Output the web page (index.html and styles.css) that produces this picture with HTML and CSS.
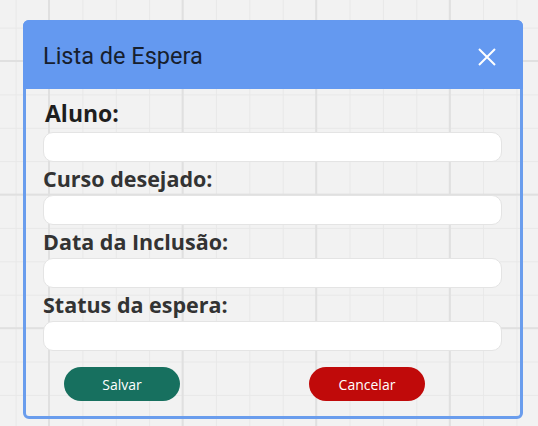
FILE: index.html
```html
<!DOCTYPE html>
<html lang="pt">
<head>
<meta charset="utf-8">
<title>Lista de Espera</title>
<link rel="stylesheet" href="styles.css">
</head>
<body>
<div class="dialog">
  <div class="dialog-header">
    <h1 class="dialog-title">Lista de Espera</h1>
    <button class="close-btn" aria-label="Fechar">
      <svg width="20" height="20" viewBox="0 0 20 20"><path d="M2 2 L18 18 M18 2 L2 18" stroke="#fff" stroke-width="2" fill="none"/></svg>
    </button>
  </div>
  <form class="dialog-body">
    <label class="field-label first">Aluno:</label>
    <input class="field-input" type="text">
    <label class="field-label">Curso desejado:</label>
    <input class="field-input" type="text">
    <label class="field-label">Data da Inclusão:</label>
    <input class="field-input" type="text">
    <label class="field-label">Status da espera:</label>
    <input class="field-input" type="text">
    <div class="actions">
      <button type="button" class="btn btn-save">Salvar</button>
      <button type="button" class="btn btn-cancel">Cancelar</button>
    </div>
  </form>
</div>
</body>
</html>
```
FILE: styles.css
```css
html, body {
  margin: 0;
  padding: 0;
  width: 538px;
  height: 426px;
  overflow: hidden;
}
body {
  background-color: #f2f2f2;
  background-image:
    linear-gradient(to right, #e0e0e0 0, #e0e0e0 2px, transparent 2px),
    linear-gradient(to bottom, #e0e0e0 0, #e0e0e0 2px, transparent 2px),
    linear-gradient(to right, #e8e8e8 0, #e8e8e8 1px, transparent 1px),
    linear-gradient(to bottom, #e8e8e8 0, #e8e8e8 1px, transparent 1px);
  background-size: 133.6px 133.6px, 133.6px 133.6px, 33.4px 33.4px, 33.4px 33.4px;
  background-position: 48px 60px, 48px 60px, 15.6px 27.6px, 15.6px 27.6px;
  padding: 20px 0 0 23px;
  box-sizing: border-box;
  font-family: "Open Sans", sans-serif;
}
.dialog {
  width: 500px;
  height: 399px;
  box-sizing: border-box;
  border: 3px solid #6a9ded;
  border-radius: 6px;
  display: flex;
  flex-direction: column;
}
.dialog-header {
  background: #6499f0;
  height: 69px;
  margin: -3px -3px 0 -3px;
  border-radius: 6px 6px 0 0;
  display: flex;
  align-items: center;
  justify-content: space-between;
  padding: 0 26px 0 20px;
  box-sizing: border-box;
  flex: none;
}
.dialog-title {
  margin: 0;
  font-family: Roboto, sans-serif;
  font-weight: 400;
  font-size: 23.5px;
  color: #17202e;
  padding-top: 2px;
}
.close-btn {
  background: none;
  border: 0;
  padding: 0;
  width: 20px;
  height: 20px;
  display: flex;
  margin-top: 4px;
}
.dialog-body {
  display: flex;
  flex-direction: column;
  padding: 8px 18px 0 17px;
  margin: 0;
}
.field-label {
  font-family: "Open Sans", sans-serif;
  font-weight: 700;
  font-size: 21.5px;
  line-height: 26px;
  color: #333;
  margin: 4px 0 3px 0;
}
.field-label.first {
  font-size: 23px;
  line-height: 32px;
  color: #1e1e1e;
  margin: 0 0 3px 2px;
}
.field-input {
  height: 30px;
  box-sizing: border-box;
  border: 1px solid #e4e4e4;
  border-radius: 10px;
  background: #fff;
  margin: 0;
  width: 459px;
}
.actions {
  display: flex;
  gap: 129px;
  padding: 16px 0 0 21px;
}
.btn {
  width: 116px;
  height: 34px;
  border: 0;
  border-radius: 17px;
  color: #fff;
  font-family: "Open Sans", sans-serif;
  font-size: 14px;
}
.btn-save {
  background: #17705f;
}
.btn-cancel {
  background: #c00a0a;
}
```
